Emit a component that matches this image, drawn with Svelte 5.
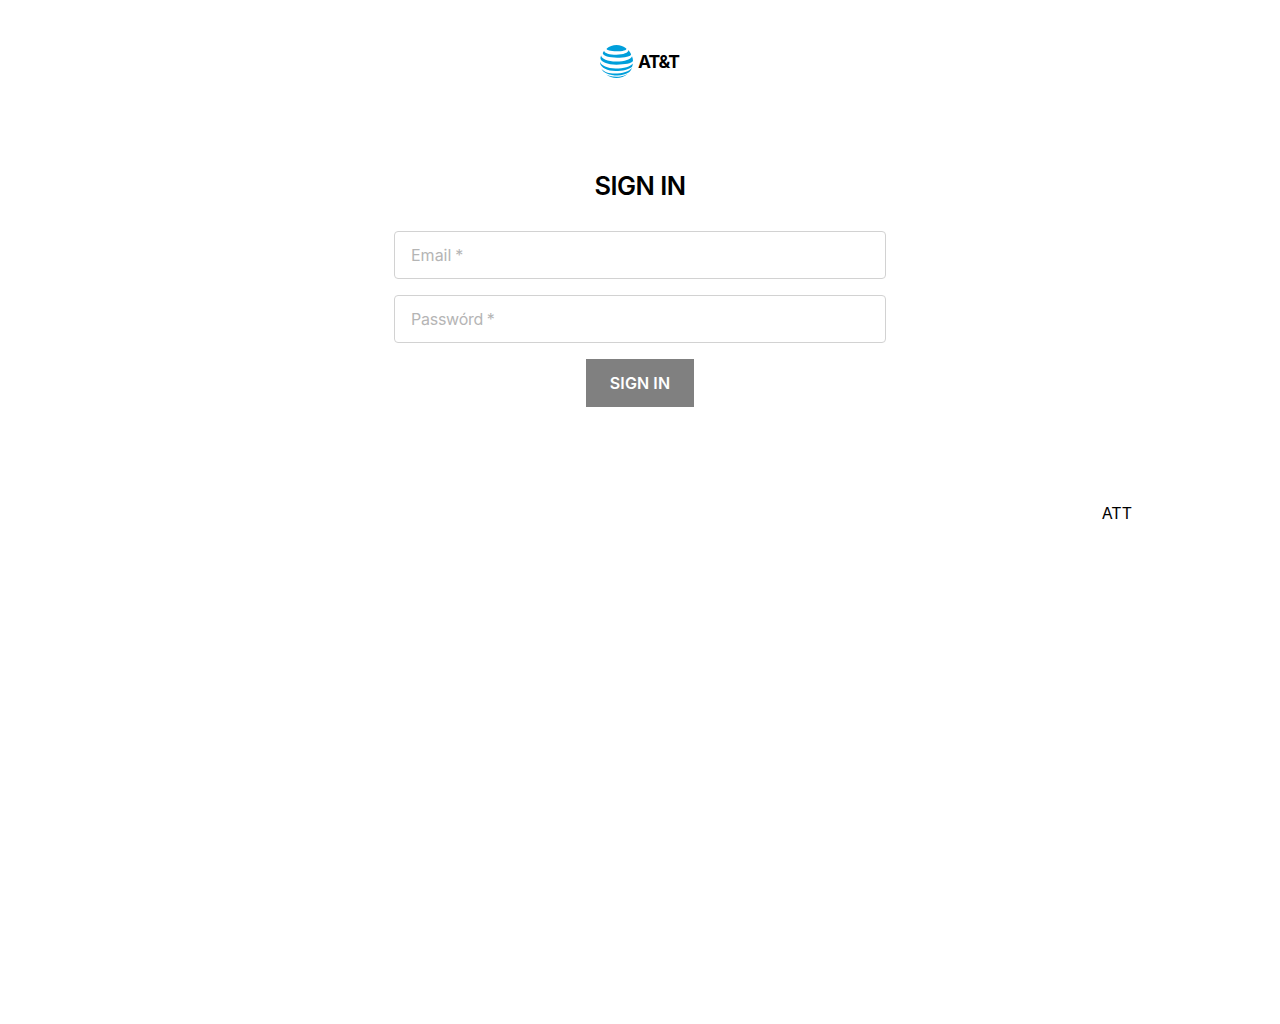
<script lang="ts">
	let email = '';
	let password = '';
</script>

<header>
	<svg class="globe" viewBox="0 0 24 24" aria-hidden="true">
		<path d="M4.900 2.600C6.800 1 9.300 0 12 0s5.200 1 7.100 2.500c.8 1.200-2.900 2.100-7.100 2.100S4.200 3.800 4.900 2.600Z" />
		<path d="M3 4.100C3 5.800 7 7.100 12 7.100c4.800 0 9-1.500 8.600-3.400.8.8 1.500 2 2 3 .2 1.500-4.700 2.600-10.200 2.600C6.800 9.300 2 8 2 5.900c.2-.7.600-1.300 1-1.800Z" />
		<path d="M.9 7.600C.8 10 5.700 12 11.700 12c6.200 0 11.100-1.800 11.600-3.900.5 1.200.7 2.400.7 3.600-.8 1.700-6 2.600-12 2.600C5.300 14.300.4 12.100.3 9.600c0-.7.3-1.400.6-2Z" />
		<path d="M0 12.200c1 2.800 5.400 4.900 11.300 4.900 6 0 11-1.600 12.600-3.700-.1.900-.3 1.700-.6 2.400-2 2-7 3.100-12 3.100C5.500 18.900.7 16.600.1 13.300Z" />
		<path d="M1 17.200c1.700 2.300 5.800 3.600 9.700 3.600 5.500 0 10.800-1.700 12.600-4.300-.6 1.500-1.300 2.500-2.200 3.300-2 1.500-5.300 2.300-8.300 2.300C7.100 22.100 2.500 20.400 1 17.200Z" />
		<path d="M4.500 21.500C6.600 23.100 9.200 24 12 24s5.900-1.100 8-3c-1 .6-3.700 2-8 2-3.800 0-6.200-.8-7.500-1.500Z" />
	</svg>
	<span class="wordmark">AT&amp;T</span>
</header>

<main>
	<h1>SIGN IN</h1>
	<form on:submit|preventDefault>
		<input type="email" placeholder="Email *" aria-label="Email" bind:value={email} />
		<input
			class="password"
			type="password"
			placeholder="Passwórd *"
			aria-label="Passwórd"
			bind:value={password}
		/>
		<button type="submit" disabled={!email || !password}>SIGN IN</button>
	</form>
</main>

<footer>ATT</footer>

<style>
	:global(body) {
		background: #fff;
		color: #000;
		font-family: Inter, 'Liberation Sans', sans-serif;
		font-size: 16px;
	}

	header {
		display: flex;
		justify-content: center;
		align-items: center;
		gap: 5px;
		height: 33px;
		padding-top: 45px;
	}

	.globe {
		display: block;
		width: 33px;
		height: 33px;
		fill: #009fdb;
	}

	.wordmark {
		width: 42px;
		font-size: 17.500px;
		font-weight: 700;
		line-height: 32px;
		letter-spacing: -1px;
		white-space: nowrap;
	}

	main {
		width: 492px;
		margin: 92px auto 0;
	}

	h1 {
		margin: 0 0 29px;
		font-size: 25.400px;
		font-weight: 600;
		line-height: 32px;
		letter-spacing: -0.500px;
		text-align: center;
	}

	form {
		display: flex;
		flex-direction: column;
		align-items: center;
		gap: 16px;
	}

	input {
		box-sizing: border-box;
		width: 100%;
		height: 48px;
		padding: 0 16px;
		border: 1px solid #d2d2d2;
		border-radius: 4px;
		background: #fff;
		font: inherit;
		outline: none;
	}

	input::placeholder {
		color: #b5b5b5;
		opacity: 1;
		word-spacing: -0.500px;
	}

	.password::placeholder {
		letter-spacing: -0.250px;
	}

	button {
		width: 108px;
		height: 48px;
		padding: 0;
		border: 0;
		background: #808080;
		color: #fff;
		font: inherit;
		font-weight: 600;
		letter-spacing: 0.100px;
	}

	footer {
		margin: 96px 148px 0 0;
		line-height: 20px;
		text-align: right;
	}
</style>
